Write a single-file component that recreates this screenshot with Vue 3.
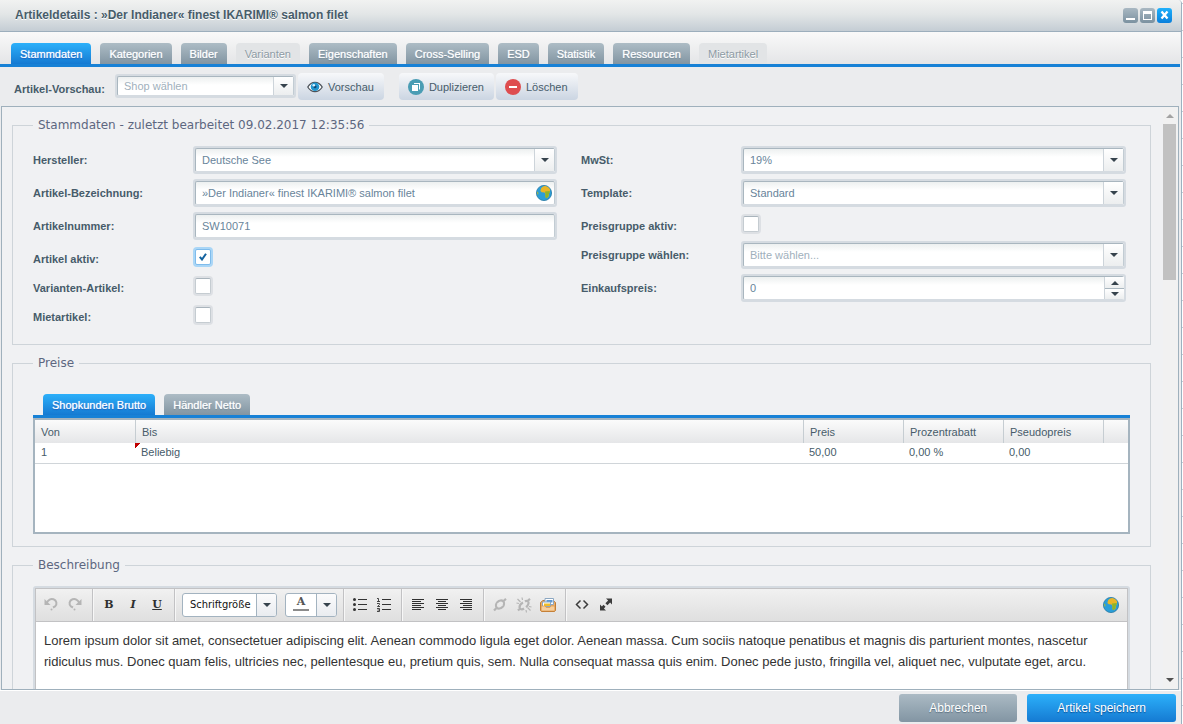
<script setup>
import { ref } from 'vue'

const tabs = [
  { name: 'Stammdaten', active: true },
  { name: 'Kategorien' },
  { name: 'Bilder' },
  { name: 'Varianten', disabled: true },
  { name: 'Eigenschaften' },
  { name: 'Cross-Selling' },
  { name: 'ESD' },
  { name: 'Statistik' },
  { name: 'Ressourcen' },
  { name: 'Mietartikel', disabled: true },
]

const articleName = ref('»Der Indianer« finest IKARIMI® salmon filet')
const articleNumber = ref('SW10071')
const purchasePrice = ref(0)
const active = ref(true)
const variants = ref(false)
const rental = ref(false)
const priceGroup = ref(false)
const description = ref(
  'Lorem ipsum dolor sit amet, consectetuer adipiscing elit. Aenean commodo ligula eget dolor. Aenean massa. Cum sociis natoque penatibus et magnis dis parturient montes, nascetur ridiculus mus. Donec quam felis, ultricies nec, pellentesque eu, pretium quis, sem. Nulla consequat massa quis enim. Donec pede justo, fringilla vel, aliquet nec, vulputate eget, arcu.'
)
const prices = [
  { from: '1', to: 'Beliebig', price: '50,00', discount: '0,00 %', pseudo: '0,00' },
]
</script>

<template>
  <div class="desktop">
    <main class="window">
      <header class="titlebar">
        <h1>Artikeldetails : »Der Indianer« finest IKARIMI® salmon filet</h1>
        <div class="tools">
          <button class="tool" aria-label="Minimieren">
            <svg viewBox="0 0 15 15"><rect x="3" y="10" width="9" height="2" fill="#fff" /></svg>
          </button>
          <button class="tool" aria-label="Maximieren">
            <svg viewBox="0 0 15 15"><path d="M3 3h9v9H3z M4 6v5h7V6z" fill="#fff" fill-rule="evenodd" /></svg>
          </button>
          <button class="tool close" aria-label="Schließen">
            <svg viewBox="0 0 15 15"><path d="M4.500 3.500l6 7M10.500 3.500l-6 7" stroke="#fff" stroke-width="2.300" /></svg>
          </button>
        </div>
      </header>

      <nav class="tabs main-tabs">
        <button
          v-for="t in tabs"
          :key="t.name"
          class="tab"
          :class="{ active: t.active }"
          :disabled="t.disabled"
        >{{ t.name }}</button>
      </nav>

      <div class="toolbar">
        <label for="shop">Artikel-Vorschau:</label>
        <div class="field shop">
          <select id="shop" class="empty"><option>Shop wählen</option></select>
          <span class="trigger"><svg viewBox="0 0 8 4"><path d="M0 0h8L4 4z" /></svg></span>
        </div>
        <button class="action">
          <svg viewBox="0 0 16 16">
            <path d="M.8 8C3 4.300 5.500 3.300 8 3.300S13 4.300 15.200 8C13 11.700 10.500 12.700 8 12.700S3 11.700.8 8z" fill="#fff" stroke="#4b5259" stroke-width="1.300" />
            <circle cx="8" cy="7.700" r="4.300" fill="#2196cf" /><circle cx="8" cy="7.700" r="1.500" fill="#124a75" /><circle cx="6.800" cy="6.200" r="1.300" fill="#d9f3ff" />
          </svg>
          Vorschau
        </button>
        <button class="action duplicate">
          <svg viewBox="0 0 16 16">
            <circle cx="8" cy="8" r="8" fill="#4a9db4" />
            <path d="M6 4h6v6.500h-1V5H6z" fill="#fff" /><rect x="4" y="6" width="6" height="6" fill="#fff" />
          </svg>
          Duplizieren
        </button>
        <button class="action">
          <svg viewBox="0 0 16 16">
            <circle cx="8" cy="8" r="8" fill="#de4d4f" /><rect x="4" y="7" width="8" height="2" fill="#fff" />
          </svg>
          Löschen
        </button>
      </div>

      <section class="body">
        <div class="content">
          <fieldset>
            <legend>Stammdaten - zuletzt bearbeitet 09.02.2017 12:35:56</legend>
            <div class="columns">
              <div class="column">
                <div class="row">
                  <label for="maker">Hersteller:</label>
                  <div class="field">
                    <select id="maker"><option>Deutsche See</option></select>
                    <span class="trigger"><svg viewBox="0 0 8 4"><path d="M0 0h8L4 4z" /></svg></span>
                  </div>
                </div>
                <div class="row">
                  <label for="name">Artikel-Bezeichnung:</label>
                  <div class="field">
                    <input id="name" v-model="articleName" type="text" />
                    <button class="globe inset" aria-label="Übersetzen">
                      <svg viewBox="0 0 16 16">
                        <circle cx="8" cy="8" r="7.600" fill="#2a9ed8" stroke="#2679a3" stroke-width=".8" />
                        <path d="M5 3.500C6 1.800 8 .8 10 1.200c2 .6 3.400 1.800 4.200 3.600l-.4 2.200-.8 1.600-.5 2.800-1.900 1.900-1.100-1.300.2-2.600-1.200-1.800-2.800-.3L4.400 6z" fill="#eab526" />
                        <path d="M9 6.500l4.800-.5-.2 1.500-.8 1.600-.5 2.500-1.900 1.700-1.100-1.300.2-2.600z" fill="#8db52a" />
                        <path d="M1 6.500l1.200.8.4 1.800-1 .6C1 8.700.8 7.500 1 6.500z" fill="#9ab44a" />
                      </svg>
                    </button>
                  </div>
                </div>
                <div class="row">
                  <label for="number">Artikelnummer:</label>
                  <div class="field"><input id="number" v-model="articleNumber" type="text" /></div>
                </div>
                <div class="row check-row">
                  <label for="active">Artikel aktiv:</label>
                  <div class="check">
                    <input id="active" v-model="active" type="checkbox" />
                    <svg v-if="active" viewBox="0 0 8 8"><path d="M.8 3.800L3 6.500 7 .8" fill="none" stroke="#14639f" stroke-width="2" /></svg>
                  </div>
                </div>
                <div class="row check-row">
                  <label for="variants">Varianten-Artikel:</label>
                  <div class="check"><input id="variants" v-model="variants" type="checkbox" /></div>
                </div>
                <div class="row check-row">
                  <label for="rental">Mietartikel:</label>
                  <div class="check"><input id="rental" v-model="rental" type="checkbox" /></div>
                </div>
              </div>

              <div class="column second">
                <div class="row">
                  <label for="tax">MwSt:</label>
                  <div class="field">
                    <select id="tax"><option>19%</option></select>
                    <span class="trigger"><svg viewBox="0 0 8 4"><path d="M0 0h8L4 4z" /></svg></span>
                  </div>
                </div>
                <div class="row">
                  <label for="template">Template:</label>
                  <div class="field">
                    <select id="template"><option>Standard</option></select>
                    <span class="trigger"><svg viewBox="0 0 8 4"><path d="M0 0h8L4 4z" /></svg></span>
                  </div>
                </div>
                <div class="row check-row">
                  <label for="pg-active">Preisgruppe aktiv:</label>
                  <div class="check"><input id="pg-active" v-model="priceGroup" type="checkbox" /></div>
                </div>
                <div class="row">
                  <label for="pg">Preisgruppe wählen:</label>
                  <div class="field">
                    <select id="pg" class="empty"><option>Bitte wählen...</option></select>
                    <span class="trigger"><svg viewBox="0 0 8 4"><path d="M0 0h8L4 4z" /></svg></span>
                  </div>
                </div>
                <div class="row">
                  <label for="purchase">Einkaufspreis:</label>
                  <div class="field">
                    <input id="purchase" v-model="purchasePrice" type="number" />
                    <span class="spinner">
                      <button aria-label="Erhöhen" @click="purchasePrice++"><svg viewBox="0 0 8 4"><path d="M0 4h8L4 0z" /></svg></button>
                      <button aria-label="Verringern" @click="purchasePrice--"><svg viewBox="0 0 8 4"><path d="M0 0h8L4 4z" /></svg></button>
                    </span>
                  </div>
                </div>
              </div>
            </div>
          </fieldset>

          <fieldset>
            <legend>Preise</legend>
            <div class="tabs price-tabs">
              <button class="tab active">Shopkunden Brutto</button>
              <button class="tab">Händler Netto</button>
            </div>
            <div class="grid">
              <table>
                <thead>
                  <tr>
                    <th class="narrow">Von</th>
                    <th>Bis</th>
                    <th class="narrow">Preis</th>
                    <th class="narrow">Prozentrabatt</th>
                    <th class="narrow">Pseudopreis</th>
                    <th class="filler"></th>
                  </tr>
                </thead>
                <tbody>
                  <tr v-for="p in prices" :key="p.from">
                    <td>{{ p.from }}</td>
                    <td class="dirty">{{ p.to }}</td>
                    <td>{{ p.price }}</td>
                    <td>{{ p.discount }}</td>
                    <td>{{ p.pseudo }}</td>
                    <td></td>
                  </tr>
                </tbody>
              </table>
            </div>
          </fieldset>

          <fieldset>
            <legend>Beschreibung</legend>
            <div class="editor">
              <div class="editbar">
                <div class="group">
                  <button aria-label="Rückgängig"><svg viewBox="0 0 16 16"><path d="M3.500 6.500C5 2.500 8 1.300 10.500 2.300c3.200 1.200 4 5 1.500 7.200L10 10.500" fill="none" stroke="#b5b5b5" stroke-width="2" /><path d="M1.500 2v6h6z" fill="#b5b5b5" /><circle cx="8.500" cy="12.500" r="1" fill="#b5b5b5" /></svg></button>
                  <button aria-label="Wiederholen"><svg viewBox="0 0 16 16"><path d="M12.500 6.500C11 2.500 8 1.300 5.500 2.300c-3.200 1.200-4 5-1.500 7.200L6 10.500" fill="none" stroke="#b5b5b5" stroke-width="2" /><path d="M14.500 2v6h-6z" fill="#b5b5b5" /><circle cx="7.500" cy="12.500" r="1" fill="#b5b5b5" /></svg></button>
                </div>
                <div class="group letters">
                  <button><b>B</b></button>
                  <button><i>I</i></button>
                  <button><u>U</u></button>
                </div>
                <div class="group pickers">
                  <div class="picker size">
                    <select aria-label="Schriftgröße"><option>Schriftgröße</option></select>
                    <span class="trigger"><svg viewBox="0 0 8 4"><path d="M0 0h8L4 4z" /></svg></span>
                  </div>
                  <button class="picker color" aria-label="Textfarbe">
                    <span class="swatch">A</span>
                    <span class="trigger"><svg viewBox="0 0 8 4"><path d="M0 0h8L4 4z" /></svg></span>
                  </button>
                </div>
                <div class="group">
                  <button aria-label="Aufzählung"><svg viewBox="0 0 16 16"><path d="M6 2.500h9M6 7.500h9M6 12.500h9" stroke="#333" /><circle cx="2.500" cy="2.500" r="1.500" fill="#333" /><circle cx="2.500" cy="7.500" r="1.500" fill="#333" /><circle cx="2.500" cy="12.500" r="1.500" fill="#333" /></svg></button>
                  <button aria-label="Nummerierung"><svg viewBox="0 0 16 16"><path d="M6 2.500h9M6 7.500h9M6 12.500h9" stroke="#333" /><path d="M1 1.500h1.500v3M1 4.500h3M1 6.500h2.500v1L1.500 9.500H4M1 11.500h2.500v3H1M1.500 13h2" fill="none" stroke="#333" stroke-width=".9" /></svg></button>
                </div>
                <div class="group">
                  <button aria-label="Linksbündig"><svg viewBox="0 0 16 16"><path d="M2 2.500h12M2 4.500h9M2 6.500h12M2 8.500h9M2 10.500h12M2 12.500h9" stroke="#2f2f2f" /></svg></button>
                  <button aria-label="Zentriert"><svg viewBox="0 0 16 16"><path d="M2 2.500h12M4 4.500h8M2 6.500h12M4 8.500h8M2 10.500h12M4 12.500h8" stroke="#2f2f2f" /></svg></button>
                  <button aria-label="Rechtsbündig"><svg viewBox="0 0 16 16"><path d="M2 2.500h12M5 4.500h9M2 6.500h12M5 8.500h9M2 10.500h12M5 12.500h9" stroke="#2f2f2f" /></svg></button>
                </div>
                <div class="group">
                  <button aria-label="Link einfügen"><svg viewBox="0 0 16 16" fill="none" stroke="#b5b5b5"><ellipse cx="8" cy="7.500" rx="4.500" ry="3.500" stroke-width="2.200" transform="rotate(-45 8 7.500)" /><path d="M2 13.500l2.500-2.500M11.500 4L14 1.800" stroke-width="2.200" /><path d="M5.500 6.500l5 2" stroke="#eaeaea" stroke-width="1.200" /></svg></button>
                  <button aria-label="Link entfernen"><svg viewBox="0 0 16 16" fill="none" stroke="#b5b5b5" stroke-width="2.200"><path d="M8 11.500c-2 1.500-4.500.8-4.500-1.200C3.500 8.500 5 6.500 7 5.500M9 4.500c2-1.500 4 0 3.500 2-.4 1.600-1.200 2.700-2.500 3.600M2 13.500L4.500 11M11.500 4L14 1.800" /><path d="M1.500 2l3 3M6 .5l.5 2.500M.5 6l2.500.5M14.500 13.500l-3-3M10.500 15.500l-.5-2.500M15.500 10l-2.500-.5" stroke-width="1.200" /></svg></button>
                  <button aria-label="Medien"><svg viewBox="0 0 16 16"><path d="M.5 5.500L3 3.500h10l2.500 2V13.500l-1 1h-13l-1-1z" fill="#eeb068" stroke="#bf7b35" /><path d="M5 1.500h8.500v6H5z" fill="#fff" stroke="#8ba7c2" /><path d="M6.500 3h6v2.500h-6z" fill="#5c98d5" /><path d="M2.500 5h8v4.500h-8z" fill="#fff" stroke="#8ba7c2" /><path d="M4 6.500h6v2.500H4z" fill="#efbd29" /><path d="M1.200 9h4l1 1.500h3.600l1-1.500h4v5H1.200z" fill="#f7cf9c" stroke="#d38d42" stroke-width=".6" /></svg></button>
                </div>
                <div class="group last">
                  <button aria-label="Quellcode"><svg viewBox="0 0 16 16"><path d="M6.500 3.500L2.500 7.500l4 4M9.500 3.500l4 4-4 4" fill="none" stroke="#3c3c3c" stroke-width="1.500" /></svg></button>
                  <button aria-label="Vollbild"><svg viewBox="0 0 16 16"><path d="M8 1.500h6v6l-1.900-1.900-2.700 2.700-2-2 2.700-2.700zM8 13.500H2v-6l1.900 1.900 1.600-1.600 2 2-1.600 1.600z" fill="#3c3c3c" /></svg></button>
                </div>
                <button class="globe" aria-label="Übersetzen">
                  <svg viewBox="0 0 16 16">
                    <circle cx="8" cy="8" r="7.600" fill="#2a9ed8" stroke="#2679a3" stroke-width=".8" />
                    <path d="M5 3.500C6 1.800 8 .8 10 1.200c2 .6 3.400 1.800 4.200 3.600l-.4 2.200-.8 1.600-.5 2.800-1.900 1.900-1.100-1.300.2-2.600-1.200-1.800-2.800-.3L4.400 6z" fill="#eab526" />
                    <path d="M9 6.500l4.800-.5-.2 1.500-.8 1.600-.5 2.500-1.900 1.700-1.100-1.300.2-2.600z" fill="#8db52a" />
                    <path d="M1 6.500l1.200.8.4 1.800-1 .6C1 8.700.8 7.500 1 6.500z" fill="#9ab44a" />
                  </svg>
                </button>
              </div>
              <textarea v-model="description" aria-label="Beschreibung" rows="8"></textarea>
            </div>
          </fieldset>
        </div>

        <div class="scrollbar" aria-hidden="true">
          <svg class="up" viewBox="0 0 8 4"><path d="M0 4h8L4 0z" /></svg>
          <div class="thumb"></div>
          <svg class="down" viewBox="0 0 8 4"><path d="M0 0h8L4 4z" /></svg>
        </div>
      </section>

      <footer>
        <button class="big cancel">Abbrechen</button>
        <button class="big save">Artikel speichern</button>
      </footer>
    </main>
  </div>
</template>

<style>
body {
  margin: 0;
  overflow: hidden;
}
</style>

<style scoped>
* {
  box-sizing: border-box;
}

.desktop {
  height: 100vh;
  padding-right: 1px;
  background: repeating-linear-gradient(#fff 0 3px, #c3ced6 3px 4px, #fff 4px 27px);
  font: 11px/14px "Liberation Sans", Arial, sans-serif;
  color: #475c6a;
}

button,
input,
select,
textarea {
  margin: 0;
  padding: 0;
  border: 0;
  border-radius: 0;
  outline: 0;
  background: none;
  font: inherit;
  color: inherit;
  appearance: none;
}

svg {
  display: block;
}

.window {
  display: flex;
  flex-direction: column;
  height: 100%;
  border-right: 1px solid #9cb1c0;
  border-top-right-radius: 4px;
  background: #ebecee;
  overflow: hidden;
}

.titlebar {
  display: flex;
  flex: none;
  align-items: center;
  justify-content: space-between;
  height: 32px;
  padding: 0 9px 1px 15px;
  border-bottom: 1px solid #9caebc;
  background: linear-gradient(#f1f2f1, #e3e6e7 45%, #c4cdd4);
}

h1 {
  margin: 0;
  font-size: 12px;
  line-height: 14px;
  font-weight: bold;
  text-shadow: 0 1px 0 #fff;
}

.tools {
  display: flex;
  gap: 2px;
}

.tool {
  width: 15px;
  height: 15px;
  border-radius: 3px;
  background: linear-gradient(#a9b8c2, #7b91a0);
}

.tool.close {
  background: linear-gradient(#1fb0fb, #0a7fdb);
}

.tabs {
  display: flex;
  flex: none;
  align-items: flex-end;
  gap: 9px;
  border-bottom: 3px solid #1781d6;
}

.main-tabs {
  height: 35px;
  margin-right: 1px;
  padding: 0 11px;
  background: linear-gradient(#f9f9f9, #e4e5e7);
}

.tab {
  height: 21px;
  padding: 0 9px;
  border-radius: 4px 4px 0 0;
  background: linear-gradient(#adbcc5, #8295a2);
  color: #fff;
  text-shadow: 0 0 1px #e8eef2, 0 1px 1px #6b808e;
}

.tab.active {
  background: linear-gradient(#2cb0fa, #157ad2);
  text-shadow: 0 0 1px #cfe8ff, 0 1px 1px #0a4fb8;
}

.tab:disabled {
  background: #e2e4e6;
  color: #8d9aa4;
  text-shadow: 0 1px 0 #fff;
}

.toolbar {
  display: flex;
  flex: none;
  gap: 2px;
  height: 39px;
  margin: 0 2px 0 1px;
  padding: 6px 0 0 13px;
}

.toolbar label {
  width: 99px;
  padding-top: 9px;
  font-weight: bold;
}

.toolbar .shop {
  flex: none;
  width: 181px;
  height: 24px;
  margin-top: 1px;
}

.action {
  display: flex;
  align-items: center;
  gap: 5px;
  height: 27px;
  padding: 0 10px 0 9px;
  border-radius: 4px;
  background: linear-gradient(#f7f8fa, #cbd5e2);
}

.action svg {
  width: 16px;
  height: 16px;
}

.duplicate {
  margin-left: 13px;
}

.body {
  display: flex;
  flex: 1;
  min-height: 0;
  margin: 0 2px 0 1px;
  border: 1px solid #9fb0bc;
  background: #f0f1f3;
  overflow: hidden;
}

.content {
  flex: 1;
  min-width: 0;
  padding: 10px 12px 0 10px;
}

fieldset {
  min-width: 0;
  margin: 0 0 10px;
  padding: 13px 20px 12px;
  border: 1px solid #ced4d9;
}

legend {
  padding: 0 5px;
  font: 12px/16px "DejaVu Sans", Verdana, sans-serif;
  color: #5d6780;
}

.columns {
  display: grid;
  grid-template-columns: 1fr 1fr;
  margin-right: 1px;
}

.column {
  padding-right: 24px;
}

.column.second {
  padding-right: 3px;
}

.row {
  display: flex;
  min-height: 28px;
  margin-bottom: 5px;
}

.check-row {
  min-height: 24px;
}

.row label {
  flex: none;
  width: 160px;
  padding-top: 7px;
  font-weight: bold;
}

.field {
  display: grid;
  flex: 1;
  min-width: 0;
  height: 28px;
  border: 2px solid #d5dbe1;
  border-radius: 3px;
}

.field > * {
  grid-area: 1 / 1;
}

.field select,
.field input {
  width: 100%;
  height: 100%;
  min-width: 0;
  padding: 0 24px 0 6px;
  border: 1px solid #a9b6bf;
  border-bottom-color: #d5dbe1;
  border-right-color: #c2ccd3;
  border-radius: 2px;
  background: linear-gradient(#edf0f0, #fff 8px);
  color: #68849a;
  appearance: none;
}

.field select.empty {
  color: #9fb0bc;
}

.field input[type='number'] {
  appearance: textfield;
}

.trigger {
  display: flex;
  align-items: center;
  justify-content: center;
  pointer-events: none;
}

.field .trigger {
  justify-self: end;
  width: 20px;
  margin: 1px 1px 1px 0;
  border-left: 1px solid #cdd4da;
  background: linear-gradient(#fff, #eceeef);
}

.trigger svg,
.spinner svg {
  width: 8px;
  height: 4px;
  fill: #36434d;
}

.spinner {
  display: grid;
  grid-template-rows: 1fr 1fr;
  justify-self: end;
  width: 20px;
  margin: 1px 0;
  border-left: 1px solid #cdd4da;
}

.spinner button {
  display: flex;
  align-items: center;
  justify-content: center;
  background: linear-gradient(#fff, #eceeef);
}

.spinner button + button {
  border-top: 1px solid #a9b6bf;
}

.globe {
  width: 16px;
  height: 16px;
}

.globe.inset {
  align-self: center;
  justify-self: end;
  margin-right: 3px;
}

.check {
  display: grid;
  place-items: center;
  width: 20px;
  height: 20px;
  margin-top: 2px;
}

.check > * {
  grid-area: 1 / 1;
}

.check input {
  width: 16px;
  height: 16px;
  border: 1px solid #c5ccd1;
  border-top-color: #a9b4bc;
  border-radius: 2px;
  background: #fff;
  box-shadow: 0 0 0 2px #dde0e4;
}

.check input:checked {
  border-color: #7fbcec;
  box-shadow: 0 0 0 2px #aad6f6;
}

.check svg {
  width: 8px;
  height: 8px;
  pointer-events: none;
}

.price-tabs {
  margin-top: 10px;
  padding-left: 10px;
}

.grid {
  height: 116px;
  border: 2px solid #a5b4bf;
  background: #fff;
}

table {
  width: 100%;
  border-collapse: separate;
  border-spacing: 0;
  table-layout: fixed;
}

th {
  height: 23px;
  padding: 1px 6px 0;
  border-left: 1px solid #c6cdd2;
  background: linear-gradient(#fbfbfb, #e5e6e8);
  font-weight: normal;
  text-align: left;
}

th:first-child {
  border-left-color: transparent;
  padding-left: 5px;
}

.narrow {
  width: 100px;
}

.filler {
  width: 25px;
}

td {
  height: 21px;
  padding: 0 6px 2px;
  border-bottom: 1px solid #d0d5d9;
}

.dirty {
  background: linear-gradient(135deg, #c00000 4px, transparent 4px) no-repeat;
}

.editor {
  border: 2px solid #d5dbe1;
  border-radius: 3px;
}

.editbar {
  display: flex;
  align-items: center;
  height: 34px;
  padding-right: 8px;
  border: 1px solid #c2c2c4;
  border-left: 0;
  background: linear-gradient(#f1f1f1, #dfdfdf);
  box-shadow: inset 1px 0 0 #c2c2c4;
}

.group {
  display: flex;
  flex: none;
  align-items: center;
  align-self: stretch;
  padding: 0 5px 0 4px;
  border-right: 1px solid #c2c2c4;
  box-shadow: 1px 0 0 #f7f7f7;
}

.group.last {
  flex: 1;
  border: 0;
  box-shadow: none;
}

.group > button:not(.picker) {
  width: 24px;
  height: 24px;
}

.group > button > svg {
  width: 16px;
  height: 16px;
  margin: 0 auto;
}

.letters {
  font: bold 11px/16px "DejaVu Serif", Georgia, serif;
  color: #2f2f2f;
}

.group.pickers {
  gap: 8px;
  padding: 0 6px 0 7px;
}

.picker {
  display: flex;
  height: 24px;
  border: 1px solid #a3b3c0;
  border-radius: 3px;
  background: #fff;
  overflow: hidden;
}

.picker.size {
  width: 95px;
}

.picker.color {
  width: 52px;
}

.picker select {
  flex: 1;
  min-width: 0;
  padding-left: 7px;
  font: 11px/14px "DejaVu Sans Condensed", "DejaVu Sans", Tahoma, sans-serif;
  color: #111;
}

.picker .trigger {
  flex: none;
  width: 20px;
  height: 100%;
  border-left: 1px solid #a3b3c0;
  background: linear-gradient(#fbfbfc, #e9ecf0);
}

.swatch {
  width: 16px;
  margin: 2px auto 0;
  border-bottom: 2px solid #8b8b8b;
  height: 15px;
  font: bold 11px/12px "DejaVu Serif", Georgia, serif;
  color: #555;
}

textarea {
  display: block;
  width: 100%;
  padding: 8px 8px;
  border: 1px solid #c2c2c4;
  border-width: 0 1px;
  background: #fff;
  font: 13px/21px "Liberation Sans", Arial, sans-serif;
  color: #333;
  resize: none;
  overflow: hidden;
}

.scrollbar {
  display: flex;
  flex: none;
  flex-direction: column;
  align-items: center;
  width: 15px;
  padding: 7px 2px 7px 0;
  background: #f1f1f1;
}

.scrollbar svg {
  flex: none;
  width: 8px;
  height: 4px;
  fill: #505050;
}

.scrollbar .up {
  fill: #a3a3a3;
}

.thumb {
  width: 100%;
  height: 156px;
  margin-top: 6px;
  background: #c1c1c1;
}

.scrollbar .down {
  margin-top: auto;
}

footer {
  display: flex;
  flex: none;
  justify-content: flex-end;
  gap: 10px;
  padding: 3px 5px 2px;
  border-top: 1px solid #fff;
}

.big {
  height: 28px;
  padding: 0 30px;
  border-radius: 3px;
  background: linear-gradient(#abbac4, #8295a3);
  font-size: 12px;
  color: #fff;
  text-shadow: 0 1px 1px #5b7080;
}

.big.save {
  background: linear-gradient(#2cb0fa, #157ad2);
  text-shadow: 0 1px 1px #0a4f95;
}
</style>
